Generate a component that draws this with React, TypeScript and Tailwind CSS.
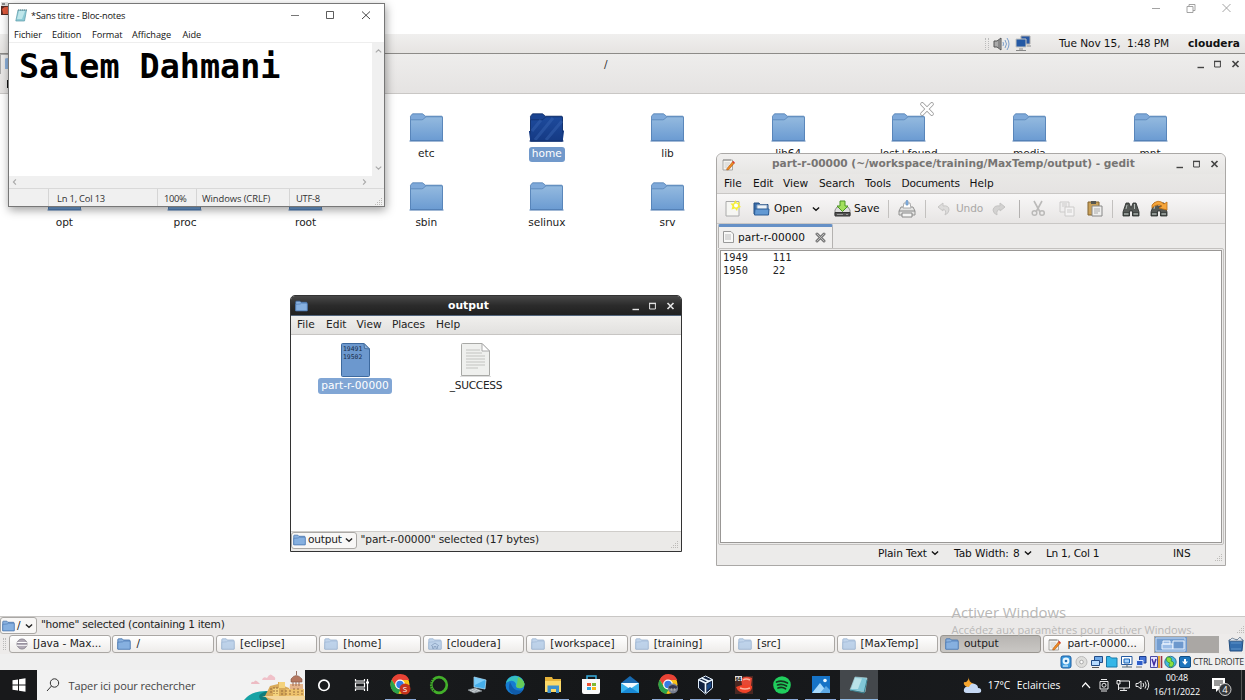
import React from "react";

type P = { className?: string };

function FolderShape({ dark = false }: { dark?: boolean }) {
  const id = React.useId();
  const top = dark ? "#1d4a9c" : "#94badf";
  const bottom = dark ? "#153a84" : "#6b9bd2";
  const line = dark ? "#0f2c66" : "#4f7db3";
  return (
    <>
      <defs>
        <linearGradient id={id} x1="0" y1="0" x2="0" y2="1">
          <stop offset="0" stopColor={top} />
          <stop offset="1" stopColor={bottom} />
        </linearGradient>
      </defs>
      <path d="M1.5 27V3.200L3.500 .800H13.500L16.500 3.200H32.500Q33.5 3.200 33.5 4.500V27Z" fill={dark ? "#1a4390" : "#7fa9d9"} stroke={line} strokeWidth=".8" />
      <path d="M1.5 27.5V7.500Q1.500 6.800 2.200 6.800H12.500Q14 6.800 15 5.500L17 3.800H32.5Q33.5 3.800 33.5 5V27.5Z" fill={`url(#${id})`} stroke={line} strokeWidth="0.7" />
      {dark && (
        <g stroke="#3a66b3" strokeWidth="3" opacity="0.45">
          <path d="M3 18L12 7M6 27L24 5M17 27L33 8" />
        </g>
      )}
      {dark && <path d="M.6 18L2 28H33L34.4 17.5" fill="none" stroke="#153a84" strokeWidth="1.4" />}
      <path d="M.500 28H34.500" stroke={dark ? "#102e68" : "#4674ae"} />
    </>
  );
}

function Folder({ className = "", dark = false }: P & { dark?: boolean }) {
  return (
    <svg className={className} viewBox="0 0 35 29">
      <FolderShape dark={dark} />
    </svg>
  );
}

function SmallFolder({ className = "", home = false }: P & { home?: boolean }) {
  return (
    <svg className={className} viewBox="0 0 14 12">
      <path d="M.8 11V1.6Q.8.8 1.6.8H5.2L6.4 2H12.2Q13 2 13 2.8V11Z" fill="#8bb2df" stroke="#3f6da7" strokeWidth=".8" />
      <path d="M.8 11.2V4.2L5.6 3.8 6.8 3H12.5Q13.2 3 13.2 3.8V11.2Z" fill="#86b0e0" stroke="#4b79b3" strokeWidth=".7" />
      {home && <path d="M3 8L7 5 11 8M4.5 8V10.5H6V8.5H8V10.5H9.5V8" fill="none" stroke="#2f5e9b" />}
    </svg>
  );
}

function Chevron({ className = "" }: P) {
  return (
    <svg className={className} viewBox="0 0 9 6">
      <path d="M1 1.2L4.5 4.4 8 1.2" fill="none" stroke="currentColor" strokeWidth="1.5" />
    </svg>
  );
}

function GtkControls({ className = "" }: P) {
  return (
    <svg className={className} viewBox="0 0 46 10" fill="none" stroke="currentColor">
      <path d="M1.500 8.5H8" strokeWidth="1.4" />
      <path d="M18.6 2.5H24.4V8H18.6Z" />
      <path d="M18 2.4H25" strokeWidth="1.4" />
      <path d="M36.500 2L42.500 8M42.500 2L36.500 8" strokeWidth="1.7" />
    </svg>
  );
}

function Grip({ className = "" }: P) {
  return (
    <svg className={className} viewBox="0 0 9 9" fill="#bdbbb8">
      <path d="M7 1h1v1H7zM7 3h1v1H7zM7 5h1v1H7zM7 7h1v1H7zM5 3h1v1H5zM5 5h1v1H5zM5 7h1v1H5zM3 5h1v1H3zM3 7h1v1H3zM1 7h1v1H1z" />
    </svg>
  );
}

function Eclipse() {
  return (
    <svg className="h-3 w-3" viewBox="0 0 12 12">
      <circle cx="6" cy="6" r="5" fill="#b0a9b5" stroke="#8f8a94" />
      <path d="M1.2 4.5H10.8M1 7.2H11" stroke="#fff" strokeWidth="1.2" />
      <path d="M1.2 6H10.8" stroke="#777080" strokeWidth=".8" />
    </svg>
  );
}

function NotePencil({ className = "" }: P) {
  return (
    <svg className={className} viewBox="0 0 13 13">
      <path d="M1 2H10.5V12H1Z" fill="#f5f5f2" stroke="#989894" strokeWidth=".8" />
      <path d="M2 1v2M4 1v2M6 1v2M8 1v2" stroke="#777" strokeWidth=".7" />
      <path d="M2.5 5H8M2.5 7H7M2.5 9H5.5" stroke="#bbb" strokeWidth=".7" />
      <path d="M5 10.5L10.8 3.5 12.4 5 6.8 11.6 4.7 12Z" fill="#f08b22" stroke="#a95510" strokeWidth=".6" />
      <path d="M10.8 3.5L12.4 5" stroke="#d33" strokeWidth="1.4" />
    </svg>
  );
}

const row1 = ["", "", "", "etc", "home", "lib", "lib64", "lost+found", "media", "mnt"];
const row2 = ["opt", "proc", "root", "sbin", "selinux", "srv", "", "", "", ""];

function FolderCell({ name }: { name: string }) {
  if (!name) return <div />;
  const sel = name === "home";
  return (
    <div className="relative flex flex-col items-center">
      <Folder className="h-[29px] w-[35px]" dark={sel} />
      <span
        className={
          sel
            ? "mt-[5px] h-[15px] rounded-[3px] bg-[#7199cb] px-[3px] text-[10.6px] leading-[13px] text-white"
            : "mt-[5px] h-[15px] px-[3px] text-[10.6px] leading-[13px] tracking-[-0.060px] text-[#222]"
        }
      >
        {name}
      </span>
      {name === "lost+found" && (
        <svg className="absolute top-[-12px] left-[71px] h-4 w-4" viewBox="0 0 16 16">
          <path d="M3.2 3.2L12.8 12.8M12.8 3.2L3.2 12.8" stroke="#9a9a9a" strokeWidth="4" strokeLinecap="round" />
          <path d="M3.2 3.2L12.8 12.8M12.8 3.2L3.2 12.8" stroke="#fff" strokeWidth="2.4" strokeLinecap="round" />
        </svg>
      )}
    </div>
  );
}

const tasks = ["[Java - Max...", "/", "[eclipse]", "[home]", "[cloudera]", "[workspace]", "[training]", "[src]", "[MaxTemp]", "output", "part-r-0000..."];

function TaskButton({ label, i }: { label: string; i: number }) {
  const active = label === "output";
  const faded = i > 1 && i < 9;
  return (
    <div
      className={
        active
          ? "flex h-[18px] w-[101.5px] items-center rounded-[3px] border border-[#999691] bg-linear-to-b from-[#b8b5b2] to-[#c9c7c4]"
          : "flex h-[18px] w-[101.5px] items-center rounded-[3px] border border-[#aaa7a4] bg-linear-to-b from-white to-[#eeecea]"
      }
    >
      <span className={faded ? "ml-[4px] w-[19px] opacity-50" : "ml-[4px] w-[19px]"}>
        {i === 0 ? <span className="ml-[2px] block"><Eclipse /></span> : i === 10 ? <NotePencil className="h-[13px] w-[13px]" /> : <SmallFolder className="h-3 w-[14px]" home={i === 4} />}
      </span>
      <span className="mt-[-2px] whitespace-nowrap text-[10.6px] leading-none tracking-[-0.050px] text-[#1c1c1c]">{label}</span>
    </div>
  );
}

function VmIcons() {
  return (
    <svg className="h-[14px] w-[133px]" viewBox="0 0 133 14">
      <rect x="1" y="1" width="10" height="12" rx="2" fill="#3b9be0" stroke="#1c5da0" />
      <circle cx="6" cy="6" r="3.4" fill="#e8f6ff" /><circle cx="6" cy="6" r="1.3" fill="#236caf" /><path d="M3 11H8" stroke="#fff" />
      <circle cx="21.500" cy="7" r="5.500" fill="#dededc" stroke="#bbb" /><circle cx="21.500" cy="7" r="1.800" fill="#fff" stroke="#aaa" />
      <g stroke="#214b86"><path d="M34.500 1.500H42.500V7.500H34.500Z" fill="#6da9e8" /><path d="M31.500 5.500H39.500V10.500H31.500Z" fill="#b6dbff" /></g><path d="M32 12.500H39" stroke="#555" />
      <path d="M46.500 12V1.500H50L51.500 3H57V12Z" fill="#35b6e7" stroke="#1978a8" />
      <path d="M61.500 1.500H72V9.500H61.500Z" fill="#fff" stroke="#2459a0" /><path d="M64 4H69.500V8H64Z" fill="#a7d3ff" stroke="#1d65b2" /><path d="M62 12H72M67 9V12" stroke="#567" />
      <path d="M79.500 1.500H86V8H79.500Z" fill="#4674d7" stroke="#193c90" /><path d="M76.500 5.500H83V10.500H76.500Z" fill="#2f5fc9" stroke="#e1ecff" /><path d="M76 12H82" stroke="#777" />
      <path d="M90.500 1.500H97.500V12.500H90.500Z" fill="#e8e4ff" stroke="#4b4aa1" /><path d="M92 4L94 10 96 4" fill="none" stroke="#402da0" strokeWidth="1.500" />
      <path d="M99 1V13" stroke="#e7a638" strokeWidth="2" /><path d="M101.500 1V13" stroke="#9a3140" strokeWidth="1.600" />
      <circle cx="110.500" cy="7" r="5.700" fill="#45b9df" stroke="#35759a" /><path d="M107 2Q113 2 111 6 116 7 112 12 107 12 110 8 105 7 107 2Z" fill="#8cdf3f" stroke="#2a8a34" strokeWidth=".700" />
      <rect x="119.500" y="1.500" width="11" height="11" rx="1.500" fill="#1d75bd" stroke="#114e85" /><path d="M124 4H126V6.500H128L125 10 122 6.500H124Z" fill="#fff" />
    </svg>
  );
}

function SearchArt() {
  return (
    <svg className="h-[30px] w-[62px]" viewBox="0 0 62 30">
      <path d="M8 14Q8 11 11 12 12 9 15 12L17 14Z" fill="#edbcc4" />
      <path d="M19 10Q20 6 24 8 27 2 30 6 33 7 32 10Z" fill="#f0c1c9" />
      <path d="M1 30Q8 21 23 21L37 23 62 26V30Z" fill="#16a2a5" />
      <path d="M18 30Q12 24 25 21L36 25Q31 27 32 30Z" fill="#127b79" />
      <path d="M22 26L27 16 35 14V12H41V16L46 18V26L34 30H25Z" fill="#d8aa59" />
      <path d="M30 18H36V27H30ZM36 12H42V18H36Z" fill="#f4d27b" />
      <path d="M47 14H60V28L46 27Z" fill="#e5b48a" />
      <path d="M48 12V9Q53 2 59 9V12Z" fill="#b4775f" stroke="#82513f" strokeWidth=".6" />
      <path d="M53.500 5V1" stroke="#82513f" strokeWidth=".8" /><path d="M50 16V12M53 16V12M56 16V12" stroke="#9a6752" />
      <path d="M43 19H61V28H43Z" fill="#edc16c" />
      <path d="M19 26H62V30H32Z" fill="#f3d69c" />
      <path d="M28 18V24M31 17V24M34 17V24M39 20V26M43 20V26M47 20V26M51 18V25M55 18V25M59 20V26" stroke="#8f6035" strokeWidth=".9" strokeDasharray="2 1" />
    </svg>
  );
}

function Chrome({ badge }: { badge: string }) {
  return (
    <svg className="h-6 w-6" viewBox="0 0 24 24">
      <circle cx="12" cy="11.500" r="9.500" fill="#fbc116" />
      <path d="M3.700 6.800A9.500 9.500 0 0 1 21.300 7H12L9 14.500Z" fill="#e94335" />
      <path d="M3.700 6.800L8 14Q10 16.500 13 16L10 20.900A9.500 9.500 0 0 1 3.700 6.800Z" fill="#2ba24c" />
      <circle cx="12" cy="11.500" r="4.900" fill="#fff" /><circle cx="12" cy="11.500" r="3.700" fill="#367be3" />
      {badge === "S" ? (
        <>
          <circle cx="17" cy="16" r="5.500" fill="#c5321d" />
          <text x="17" y="19" textAnchor="middle" fill="#fff" fontSize="8" fontFamily="Open Sans">S</text>
        </>
      ) : (
        <g><circle cx="17" cy="15.500" r="5" fill="#777e91" /><path d="M12.500 14Q17 10 21.500 14L19 17H15Z" fill="#35364f" /><circle cx="15.500" cy="16.500" r="1.200" fill="#aaa" /><circle cx="18.500" cy="16.500" r="1.200" fill="#aaa" /></g>
      )}
    </svg>
  );
}

const taskbar: { icon: React.ReactNode; open?: boolean }[] = [
  { icon: <svg className="h-6 w-6" viewBox="0 0 24 24"><circle cx="12" cy="12.300" r="5.200" fill="none" stroke="#fff" strokeWidth="1.700" /></svg> },
  { icon: <svg className="h-6 w-6" viewBox="0 0 24 24" fill="none" stroke="#fff" strokeWidth="1.200"><path d="M5.500 6V8H14.500V6M5.500 18V16H14.500V18M5.500 10H14.500V14H5.500ZM17.500 6V18" /><path d="M16 9.500H19" strokeWidth="2" /></svg> },
  { icon: <Chrome badge="S" />, open: true },
  { icon: <svg className="h-6 w-6" viewBox="0 0 24 24"><circle cx="12" cy="12" r="7.800" fill="none" stroke="#43b02a" strokeWidth="2.700" /><path d="M6 6A8 8 0 0 0 7 18" fill="none" stroke="#1a2b1c" strokeWidth="1.400" strokeDasharray="1 1.500" /></svg> },
  { icon: <svg className="h-6 w-6" viewBox="0 0 24 24"><path d="M9 4L21 7 20 16 9 14Z" fill="#45aeea" stroke="#bce7ff" strokeWidth=".700" /><path d="M9.500 4.500L20 7 10 12Z" fill="#7fcdf7" /><path d="M3 17L10 15 17 18 9 20Z" fill="#d7dde0" stroke="#81898e" strokeWidth=".7" /><path d="M6 17L12 19M8 16L14 18.500" stroke="#78838a" strokeWidth=".6" /></svg> },
  { icon: <svg className="h-6 w-6" viewBox="0 0 24 24"><circle cx="12" cy="12" r="9.500" fill="#167bd0" /><path d="M3 10C5 1 19 0 21.500 11Q21 16 15 15 12 14 13 11 10 5 3 10Z" fill="#36bfc0" /><path d="M15 4Q21 7 21.500 11 21 16 15 15 12 14 14 11Z" fill="#67cc59" /><path d="M7 9Q3 20 13 21.500 18 21 20 17 12 19 9 13Z" fill="#105ba9" /></svg> },
  { icon: <svg className="h-6 w-6" viewBox="0 0 24 24"><path d="M4 4H11L12 6H20V19H4Z" fill="#e6b33a" /><path d="M4 8H20V19H4Z" fill="#fbd969" /><path d="M6.500 20V12.500H18V20H15V16H10V20Z" fill="#3c91ce" /></svg>, open: true },
  { icon: <svg className="h-6 w-6" viewBox="0 0 24 24"><path d="M8 7V3H17V7" fill="none" stroke="#39aede" strokeWidth="1.500" /><path d="M3 6H21V19Q21 21 19 21H5Q3 21 3 19Z" fill="#f9f9f9" /><path d="M8 10H12V13H8Z" fill="#ef5132" /><path d="M13 10H17V13H13Z" fill="#80b935" /><path d="M8 14H12V17H8Z" fill="#31a7df" /><path d="M13 14H17V17H13Z" fill="#f5b817" /></svg> },
  { icon: <svg className="h-6 w-6" viewBox="0 0 24 24"><path d="M3 10L12 3 21 10V19H3Z" fill="#1769af" /><path d="M3 10H21V20H3Z" fill="#36b2ed" /><path d="M3 10L12 16 21 10" fill="#eefaff" /><path d="M3 20L12 14 21 20Z" fill="#1989d4" /></svg> },
  { icon: <Chrome badge="" />, open: true },
  { icon: <svg className="h-6 w-6" viewBox="0 0 24 24"><path d="M11.500 3L18.500 6.500V15L11.500 21 4.500 15V6.500Z" fill="#10213f" stroke="#e0edfa" /><path d="M4.500 6.500L11.500 10 18.500 6.500M11.500 10V20M7.500 5L15.500 8.500" fill="none" stroke="#edf7ff" strokeWidth="1.600" /><path d="M13 12L17 9V14L13 17.500Z" fill="#184785" /></svg>, open: true },
  { icon: <svg className="h-6 w-6" viewBox="0 0 24 24"><path d="M3 3H21V21H3Z" fill="#492722" /><path d="M9 6Q13 2 20 5L19 13Q14 15 10 12Z" fill="#e64834" /><path d="M4 14Q13 10 20 13 21 18 14 20 6 20 4 14Z" fill="#f04228" /><path d="M11 7Q14 5 18 7M8 15Q13 17 18 15" fill="none" stroke="#ffb19c" strokeWidth="1.500" /><path d="M3 3H10V8H3Z" fill="#ddd" /><text x="3.500" y="7.500" fontSize="5" fontFamily="Liberation Sans" fontWeight="bold">64</text></svg>, open: true },
  { icon: <svg className="h-6 w-6" viewBox="0 0 24 24"><circle cx="12" cy="12" r="8.800" fill="#20ce5d" /><path d="M6.500 9Q12 7 17.500 10M7.500 12Q12 10.500 16.500 13M8 15Q12 13.500 15.500 15.800" fill="none" stroke="#15361f" strokeWidth="1.700" strokeLinecap="round" /></svg>, open: true },
  { icon: <svg className="h-6 w-6" viewBox="0 0 24 24"><path d="M3 3H21V20H3Z" fill="#1673c6" /><path d="M3 20L11 10 19 20Z" fill="#a8dafb" /><path d="M11 20L17 13 21 17V20Z" fill="#5da9e4" /><circle cx="16" cy="7.500" r="1.800" fill="#edf9ff" /></svg>, open: true },
  { icon: <svg className="h-6 w-6" viewBox="0 0 24 24"><path d="M8 4L20 5 18 19 3 17Z" fill="#80c6d6" stroke="#b9d8dc" strokeWidth=".6" /><path d="M8 5L15 5.500 11 16 4 16Z" fill="#c7e9ec" opacity=".8" /><path d="M3 17L17 20 20 7" fill="none" stroke="#398190" /></svg>, open: true },
];

function GeditToolbar() {
  return (
    <div className="flex h-[31px] items-center border-t border-b border-t-[#c9c7c5] border-b-[#c9c7c5] bg-linear-to-b from-[#f8f7f7] to-[#e7e5e4] pl-[8px] text-[10.6px]">
      <svg className="mr-[12px] h-[17px] w-4" viewBox="0 0 16 17"><path d="M1 1.500H14V16H1Z" fill="#f6f6f3" stroke="#aaa" /><path d="M10.500 0L12 3 15 2 14 5 16 7 13 8 12 11 10 8.500 6.500 9.500 7.500 6 5.500 3.500 8.500 3.500Z" fill="#f5ee35" /><circle cx="11" cy="5.500" r="2" fill="#fff" /></svg>
      <svg className="mr-[4px] h-4 w-[17px]" viewBox="0 0 17 16"><path d="M1 13V2H6L7 3.500H15V13Z" fill="#396da9" stroke="#244f83" /><path d="M4 4H14V9H4Z" fill="#eef3f8" stroke="#8ca5c1" /><path d="M2 8H16L15.500 14H1.500Z" fill="#6299d3" stroke="#2c5d96" /></svg>
      <span className="w-[38px]">Open</span>
      <Chevron className="mr-[14px] h-[6px] w-2" />
      <svg className="mr-[3px] h-[17px] w-[17px]" viewBox="0 0 17 17"><path d="M1 10L3 7H14L16 10V15H1Z" fill="#ddd" stroke="#777" strokeWidth=".8" /><path d="M1 12.500H16V16H1Z" fill="#555" stroke="#333" /><path d="M6 1H11V6H14L8.500 11.500 3 6H6Z" fill="#a2e05c" stroke="#4c9525" /><path d="M3 14.500H9M12 14.500H14" stroke="#999" /></svg>
      <span className="w-[34px] tracking-[-0.150px]">Save</span>
      <span className="mr-[9px] h-[18px] w-px bg-[#c3c1bf]" />
      <svg className="mr-[9px] h-[18px] w-[18px]" viewBox="0 0 18 18"><path d="M3 7H15L17 11V15H1V11Z" fill="#e3e3e2" stroke="#929291" /><path d="M5 8L6 3H12L13 8Z" fill="#fff" stroke="#aaa" /><path d="M8 1Q9-.5 10 1V5H8Z" fill="#8bb9ec" stroke="#628cb9" strokeWidth=".7" /><path d="M1 11H17M4 13H14V17H4Z" fill="#f5f5f4" stroke="#888" /></svg>
      <span className="mr-[11px] h-[18px] w-px bg-[#c3c1bf]" />
      <svg className="mr-[5px] h-[14px] w-[14px]" viewBox="0 0 14 14"><path d="M1 5L6 1V4Q12 3 12 8 12 11 8 13 10 8 6 7V9Z" fill="#dddcdb" stroke="#c7c6c5" /></svg>
      <span className="w-[36px] tracking-[-0.150px] text-[#aaa8a6]">Undo</span>
      <svg className="mr-[13px] h-[14px] w-[14px]" viewBox="0 0 14 14"><path d="M13 5L8 1V4Q2 3 1 8 1 11 5 13 4 8 8 7V9Z" fill="#d3d2d1" stroke="#c5c4c3" /></svg>
      <span className="mr-[11px] h-[18px] w-px bg-[#b3b1b0]" />
      <svg className="mr-[13px] h-[17px] w-[15px]" viewBox="0 0 15 17" fill="none" stroke="#bbbab9"><path d="M3 1L9 12M11 1L5 12" strokeWidth="1.600" /><circle cx="3.500" cy="13" r="2.300" strokeWidth="1.500" /><circle cx="11" cy="13" r="2.300" strokeWidth="1.500" /></svg>
      <svg className="mr-[12px] h-4 w-4" viewBox="0 0 16 16" stroke="#cccbca"><path d="M1 1H10V11H1Z" fill="#efeeee" /><path d="M6 6H15V15H6Z" fill="#f4f3f3" /><path d="M3 3H8M3 5H8M8 9H13M8 11H13" /></svg>
      <svg className="mr-[9px] h-[17px] w-4" viewBox="0 0 16 17"><path d="M1 2H12V15H1Z" fill="#c9a15a" stroke="#81622e" /><path d="M4 1H9V4H4Z" fill="#565650" /><path d="M5 6H15V16H5Z" fill="#eeeeed" stroke="#888" /><path d="M7 9H13M7 11H13M7 13H11" stroke="#aaa" /></svg>
      <span className="mr-[9px] h-[18px] w-px bg-[#c3c1bf]" />
      <Binoculars />
      <span className="ml-[10px]"><Binoculars replace /></span>
    </div>
  );
}

function Binoculars({ replace = false }: { replace?: boolean }) {
  return (
    <svg className="h-[18px] w-[18px]" viewBox="0 0 18 18">
      <path d="M4 3H7L8.500 7H9.500L11 3H14L17 12V16H10.500V11H7.500V16H1V12Z" fill="#555956" stroke="#272b29" strokeWidth=".8" />
      <path d="M1.500 12.500H7V15.500H1.500ZM11 12.500H16.500V15.500H11Z" fill="#8f9692" stroke="#202522" strokeWidth=".6" />
      <path d="M5 5L4 9M12.500 4V9" stroke="#b4bbb7" />
      {replace && <path d="M2 5Q8-2 14 4L17 2V10L9 8 12 6Q7 3 2 8Z" fill="#f6a53a" stroke="#bd6e15" strokeWidth=".8" />}
    </svg>
  );
}

function Gedit() {
  return (
    <div className="absolute top-[153px] left-[716px] flex h-[413px] w-[510px] flex-col rounded-t-[6px] border border-[#aaa8a6] bg-[#ecebea] text-[#111]">
      <div className="flex h-[20px] shrink-0 items-center rounded-t-[5px] bg-linear-to-b from-[#f1f0ef] to-[#e7e6e4]">
        <NotePencil className="ml-[5px] h-[13px] w-[13px]" />
        <span className="mt-[-1px] ml-[37px] w-[401px] whitespace-nowrap text-[10.6px] leading-none font-bold tracking-[-0.020px] text-[#777573]">part-r-00000 (~/workspace/training/MaxTemp/output) - gedit</span>
        <GtkControls className="ml-[2px] h-[10px] w-[46px] text-[#444]" />
      </div>
      <div className="flex h-[19px] shrink-0 items-center bg-linear-to-b from-[#e9e8e6] to-[#e5e3e2] pl-[7px] text-[10.6px] leading-none whitespace-nowrap">
        <span className="w-[29px]">File</span><span className="w-[30px]">Edit</span><span className="w-[36px]">View</span><span className="w-[46px] tracking-[-0.150px]">Search</span><span className="w-[36.500px]">Tools</span><span className="w-[68px] tracking-[-0.250px]">Documents</span><span>Help</span>
      </div>
      <GeditToolbar />
      <div className="flex h-[24px] shrink-0 items-end pl-px">
        <div className="flex h-[24px] w-[115px] items-center rounded-t-[2px] border border-t-[3px] border-b-0 border-[#b4b2b0] border-t-[#6590c6] bg-[#f0efee] pb-px">
          <svg className="ml-[4px] h-3 w-[11px]" viewBox="0 0 11 12"><path d="M.5.500H8L10.500 3V11.500H.500Z" fill="#f8f8f7" stroke="#999" /><path d="M2 4H8M2 6H8M2 8H8" stroke="#bbb" /></svg>
          <span className="ml-[4px] w-[77px] whitespace-nowrap text-[10.6px] leading-none tracking-[0.030px]">part-r-00000</span>
          <svg className="h-[11px] w-[11px]" viewBox="0 0 11 11"><path d="M2 2L9 9M9 2L2 9" stroke="#777" strokeWidth="3" strokeLinecap="round" /><path d="M2 2L9 9M9 2L2 9" stroke="#bbb" strokeWidth="1" strokeLinecap="round" /></svg>
        </div>
      </div>
      <div className="mx-px h-[297px] shrink-0 rounded-[2px] border border-[#c3c1bf] p-px">
        <div className="h-full border border-[#999795] bg-white pl-[2px] font-['DejaVu_Sans_Mono',monospace] text-[10.35px] leading-[13px] whitespace-pre text-[#222]">{"1949    111\n1950    22"}</div>
      </div>
      <div className="flex h-[16px] items-center pl-[161px] text-[10.6px] leading-none whitespace-nowrap">
        <span className="w-[53px] tracking-[-0.150px]">Plain Text</span><Chevron className="h-[6px] w-2" />
        <span className="ml-[15px] w-[59px] tracking-[-0.080px]">Tab Width:</span><span className="w-[11px]">8</span><Chevron className="h-[6px] w-2" />
        <span className="ml-[14px] w-[127px] tracking-[-0.300px]">Ln 1, Col 1</span><span className="w-[41px]">INS</span><Grip className="mt-2 h-[9px] w-[9px]" />
      </div>
    </div>
  );
}

function OutputWindow() {
  return (
    <div className="absolute top-[295px] left-[290px] flex h-[257px] w-[392px] flex-col rounded-t-[5px] border border-[#333] bg-white">
      <div className="flex h-[20px] shrink-0 items-center rounded-t-[4px] border-b border-[#52657c] bg-linear-to-b from-[#484848] via-[#2b2b2b] to-[#202020] text-white">
        <SmallFolder className="ml-[4px] h-3 w-[13px]" />
        <span className="mt-[1px] ml-[140px] w-[180px] text-[10.8px] leading-none font-bold">output</span>
        <GtkControls className="ml-[3px] h-[10px] w-[46px] text-[#e4e4e4]" />
      </div>
      <div className="flex h-[19px] shrink-0 items-center border-b border-[#c7c5c3] bg-linear-to-b from-[#f0efed] to-[#e2e1df] pb-px pl-[6px] text-[10.6px] leading-none text-[#222]">
        <span className="w-[29px]">File</span><span className="w-[30.500px]">Edit</span><span className="w-[35.500px]">View</span><span className="w-[44px] tracking-[-0.150px]">Places</span><span>Help</span>
      </div>
      <div className="flex grow pt-[8px] pl-[4px]">
        <div className="flex w-[120px] flex-col items-center">
          <div className="relative h-[34px] w-[29px]">
            <svg className="absolute inset-0 h-[34px] w-[29px]" viewBox="0 0 29 34"><path d="M.500 1.500Q.500.500 1.500.500H23L28.500 6V32.500Q28.500 33.500 27.500 33.500H1.500Q.500 33.500.500 32.500Z" fill="#6c98ce" stroke="#3d699e" /><path d="M23 .500L23.500 5.500 28.500 6Z" fill="#8fb2dc" stroke="#48719f" /></svg>
            <div className="relative pt-[2px] pl-[2.500px] font-['DejaVu_Sans_Mono',monospace] text-[6.400px] leading-[8px] whitespace-pre text-[#182d49]">{"19491\n19502"}</div>
          </div>
          <span className="mt-[1px] h-[16px] rounded-[3px] bg-[#81a6d5] px-[3px] text-[10.6px] leading-[15px] tracking-[0.080px] whitespace-nowrap text-white">part-r-00000</span>
        </div>
        <div className="flex w-[121px] flex-col items-center">
          <svg className="h-[34px] w-[31px]" viewBox="0 0 31 34"><path d="M1.500 1.500Q1.500.500 2.500.500H22L29.500 8V32.500H1.500Z" fill="#eff0ee" stroke="#a8a9a6" /><path d="M22 .500V8H29.500Z" fill="#fff" stroke="#aaa" /><path d="M6 7H20M6 10H22M6 13H25M6 16H25M6 19H25M6 22H25M6 25H18" stroke="#c2c3c0" /><path d="M0 33.500H31" stroke="#ddd" /></svg>
          <span className="mt-[1px] ml-[1px] text-[10.6px] leading-[15px] tracking-[-0.300px] text-[#222]">_SUCCESS</span>
        </div>
      </div>
      <div className="flex h-[20px] shrink-0 items-center border-t border-[#cfcdca] bg-[#ebeae8] pb-[3px] text-[10.6px] leading-none whitespace-nowrap text-[#222]">
        <div className="flex h-[17px] w-[66px] items-center rounded-[3px] border border-[#aaa8a5] bg-[#f8f7f6] pl-[1px]">
          <SmallFolder className="mr-[2px] h-3 w-[13px]" /><span className="mt-[-1px] w-[37px] tracking-[-0.200px]">output</span><Chevron className="h-[6px] w-2" />
        </div>
        <span className="mt-[-1px] ml-[3.500px] grow tracking-[-0.110px]">"part-r-00000" selected (17 bytes)</span>
        <Grip className="mt-2 mr-[2px] h-[9px] w-[9px]" />
      </div>
    </div>
  );
}

function Notepad() {
  return (
    <div className="absolute top-[3px] left-[8px] flex h-[204px] w-[377px] flex-col border border-[#777] bg-white font-['Open_Sans','Noto_Sans',sans-serif] text-[#111] shadow-[1px_3px_9px_rgba(0,0,0,0.38)]">
      <div className="flex h-[22px] shrink-0 items-center">
        <svg className="ml-[6px] h-[13px] w-[12px]" viewBox="0 0 12 13"><path d="M3 1H11.500L9.500 12H.800Z" fill="#8ecad5" stroke="#5b9caa" strokeWidth=".7" /><path d="M4 2H10L7 10H2Z" fill="#bfe6ea" /><path d="M3 1H12" stroke="#728488" strokeDasharray="1 1" /></svg>
        <span className="mt-[1px] ml-[4px] w-[259px] text-[9.200px] leading-none tracking-[-0.170px] whitespace-nowrap">*Sans titre - Bloc-notes</span>
        <svg className="h-[12px] w-[82px]" viewBox="0 0 82 12" fill="none" stroke="#333"><path d="M1 6.500H9" stroke="#777" /><path d="M36.500 2.500H43.500V9.500H36.500Z" strokeWidth=".8" /><path d="M72 2.500L80 10M80 2.500L72 10" strokeWidth=".9" /></svg>
      </div>
      <div className="flex h-[17px] shrink-0 items-center border-b border-[#eee] pt-[2px] pl-[5px] text-[9.200px] leading-none tracking-[-0.070px] whitespace-nowrap">
        <span className="w-[38px]">Fichier</span><span className="w-[40px]">Edition</span><span className="w-[40px]">Format</span><span className="w-[50.500px]">Affichage</span><span>Aide</span>
      </div>
      <div className="flex h-[133px] shrink-0">
        <div className="h-full w-[363px] pt-[4px] pl-[10px] font-['DejaVu_Sans_Mono',monospace] text-[33.400px] leading-[40px] font-bold whitespace-pre text-black">Salem Dahmani</div>
        <div className="flex w-[12px] flex-col items-center justify-between bg-[#f0f0f0] py-[5px] text-[#aaa]">
          <Chevron className="h-[6px] w-[7px] rotate-180" /><Chevron className="h-[6px] w-[7px]" />
        </div>
      </div>
      <div className="flex h-[12px] shrink-0 items-center justify-between bg-[#f0f0f0] pr-[16px] pl-[2px] text-[#aaa]">
        <Chevron className="h-[6px] w-[7px] rotate-90" /><Chevron className="h-[6px] w-[7px] -rotate-90" />
      </div>
      <div className="flex h-[18px] items-center border-t border-[#d9d9d9] bg-[#f0f0f0] text-[9.400px] leading-[19px] tracking-[-0.080px] whitespace-nowrap text-[#333]">
        <span className="h-full w-[39px]" /><span className="h-full w-[109px] border-l border-[#d5d5d5] pl-[8px] tracking-[-0.200px]">Ln 1, Col 13</span><span className="h-full w-[39px] border-l border-[#d5d5d5] pl-[6px] tracking-[-0.350px]">100%</span><span className="h-full w-[93px] border-l border-[#d5d5d5] pl-[5px]">Windows (CRLF)</span><span className="h-full w-[85px] border-l border-[#d5d5d5] pl-[6px] tracking-[-0.250px]">UTF-8</span><Grip className="mt-2 h-[9px] w-[9px]" />
      </div>
    </div>
  );
}

function WindowsTaskbar() {
  return (
    <div className="flex h-[30px] shrink-0 bg-linear-to-r from-[#1e2022] via-[#151719] to-[#1b1d20] font-['Open_Sans','Noto_Sans',sans-serif] text-white">
      <div className="flex w-[37px] items-center justify-center bg-[#18191b]">
        <svg className="h-[14px] w-[14px]" viewBox="0 0 14 14" fill="#fff"><path d="M.500 2.300L6 1.500V6.500H.500ZM7 1.300L13.500.300V6.500H7ZM.500 7.500H6V12.500L.500 11.700ZM7 7.500H13.500V13.700L7 12.700Z" /></svg>
      </div>
      <div className="flex w-[268px] items-center bg-[#f2f2f2] text-[#444]">
        <svg className="ml-[9px] h-[14px] w-[14px]" viewBox="0 0 14 14" fill="none" stroke="#333"><circle cx="8.500" cy="5" r="4.200" /><path d="M5.500 8L1 13" /></svg>
        <span className="ml-[8.500px] w-[138px] text-[11px] leading-none tracking-[-0.110px] whitespace-nowrap">Taper ici pour rechercher</span>
        <span className="ml-[36.500px]"><SearchArt /></span>
      </div>
      {taskbar.map((t, i) => (
        <div key={i} className={i === 14 ? "flex w-[38.200px] flex-col items-center bg-[#44484c] pt-[3px]" : "flex w-[38.200px] flex-col items-center pt-[3px]"}>
          {t.icon}
          {t.open && <span className={i === 14 ? "mt-[2px] h-px w-full bg-[#91b9e1]" : "mt-[2px] h-px w-[31px] bg-[#8eacd8]"} />}
        </div>
      ))}
      <svg className="mt-[6px] ml-[84px] h-[19px] w-[22px]" viewBox="0 0 22 19"><path d="M7 1Q6 6 12 8 10 13 5 11 1 9 2 6 4 7 6 4 7 2 7 1Z" fill="#f6a52d" /><path d="M5 17Q1 17 2 13 3 10 7 11 9 6 13 8 16 9 16 12 20 12 19 16 18 17 16 17Z" fill="#c6d9f4" /></svg>
      <span className="ml-[4px] w-[29px] text-[10.200px] leading-[30px] whitespace-nowrap">17°C</span>
      <span className="w-[65px] text-[10.200px] leading-[30px] whitespace-nowrap">Eclaircies</span>
      <svg className="mt-[7px] h-4 w-[68px]" viewBox="0 0 68 16" fill="none" stroke="#fff"><path d="M-1 11L3.500 6 8 11" strokeWidth="1.200" /><path d="M18 4.500H26V12H18ZM19 2.500H25M19 14H25" strokeWidth=".9" /><circle cx="22" cy="8.200" r="2" strokeWidth=".9" /><path d="M37 4H47.500V11H37M42 11V13M38 13.500H45M35 3.500H38V7H35ZM36.500 7V13" strokeWidth=".9" /><path d="M54 6.500H56L59 4V12L56 9.500H54ZM61 6Q62.500 8 61 10M63 4.500Q65.500 8 63 11.500M65 3Q68.500 8 65 13" strokeWidth=".9" /></svg>
      <div className="mt-[1px] w-[54px] text-center text-[9px] leading-[13.500px] tracking-[-0.160px] whitespace-nowrap"><div>00:48</div><div>16/11/2022</div></div>
      <svg className="mt-[7px] ml-[7px] h-[22px] w-[22px]" viewBox="0 0 22 22"><path d="M1 1H14V12H8L5 15V12H1Z" fill="#fff" /><path d="M3 4H12M3 6H12M3 8H9" stroke="#333" /><circle cx="14" cy="12.500" r="6" fill="#35383b" stroke="#ccc" /><text x="14" y="16" textAnchor="middle" fill="#fff" fontSize="9.500" fontFamily="Open Sans">4</text></svg>
      <span className="ml-auto w-[4px] border-l border-[#555]" />
    </div>
  );
}

export default function App() {
  return (
    <div className="relative flex h-[700px] w-[1245px] flex-col overflow-hidden bg-white font-['DejaVu_Sans',sans-serif]">
      <div className="flex h-[34px] shrink-0 items-start justify-between">
        <svg className="mt-[2px] ml-[1px] h-[14px] w-4" viewBox="0 0 16 14"><path d="M0 1H15V13H0Z" fill="#552c25" /><path d="M1 7Q4 3 13 6L12 12H2Z" fill="#e0593c" /><path d="M0 0H7V4H0Z" fill="#ddd" /><path d="M1 2H4" stroke="#333" /></svg>
        <svg className="mt-[2px] mr-[13px] h-3 w-[82px]" viewBox="0 0 82 12" fill="none" stroke="#999"><path d="M2 6.500H10M37 4.500H43V10.500H37ZM39 4V2.500H45V8.500H43M72.500 2L80.500 10M80.500 2L72.500 10" strokeWidth=".9" /></svg>
      </div>
      <div className="flex h-[20px] shrink-0 items-center border-b border-[#8d8b88] bg-linear-to-b from-[#f0efee] to-[#e6e4e2] text-[10.6px] leading-none whitespace-nowrap text-[#111]">
        <span className="ml-[985px] h-3 w-[4px] border-x border-dotted border-[#bbb]" />
        <svg className="ml-[4px] h-4 w-[17px]" viewBox="0 0 17 16"><path d="M1 5H4L8 2V14L4 11H1Z" fill="#aaa" stroke="#555" /><path d="M6 4V12" stroke="#666" /><path d="M10 6Q11 8 10 10M12 4Q15 8 12 12M14 2Q18 8 14 14" fill="none" stroke="#7c9fcb" /></svg>
        <svg className="ml-[4px] h-[17px] w-[18px]" viewBox="0 0 18 17"><path d="M7 1H16V9H7Z" fill="#2858a4" stroke="#aaa" /><path d="M2 4H12V12H2Z" fill="#2459a4" stroke="#c5c5c0" /><path d="M5 14H9M2 15.500H12" stroke="#888" /><path d="M13 11H17" stroke="#bbb" strokeWidth="2" /></svg>
        <span className="mt-[-1px] ml-[27px] w-[129px] tracking-[-0.080px] whitespace-pre">Tue Nov 15,  1:48 PM</span>
        <span className="mt-[-1px] font-bold">cloudera</span>
      </div>
      <div className="relative flex h-[40px] shrink-0 justify-end border-b border-[#c9c7c5] bg-linear-to-b from-[#eeedec] to-[#e5e3e2] text-[10.6px]">
        <svg className="absolute top-0 left-0 h-[39px] w-[9px]" viewBox="0 0 9 39"><path d="M0 .500H9M.500 0V20" stroke="#aaa" /><path d="M5 5Q5 4 9 4V15H5Z" fill="#8eb2dc" /><path d="M7.500 26V34" stroke="#111" /></svg>
        <span className="mt-[3px] w-[591px] leading-[14px] text-[#333]">/</span>
        <GtkControls className="mt-[5px] mr-[2px] h-[10px] w-[48px] text-[#444]" />
      </div>
      <div className="grid h-[522px] shrink-0 auto-rows-[69px] grid-cols-[repeat(10,120.650px)] pt-[19px] pl-[4px]">
        {[...row1, ...row2].map((n, i) => <FolderCell key={i} name={n} />)}
      </div>
      <div className="flex h-[18px] shrink-0 items-center border-t border-[#c9c7c5] bg-[#ebe9e8] text-[10.6px] leading-none whitespace-nowrap text-[#222]">
        <div className="flex h-[17px] w-[37px] items-center rounded-[3px] border border-[#aaa8a5] bg-[#f8f7f6] pl-[1px]"><SmallFolder className="mr-[2px] h-3 w-[13px]" /><span className="w-[8px]">/</span><Chevron className="h-[6px] w-2" /></div>
        <span className="mt-[-2px] ml-[4px] grow tracking-[-0.260px]">"home" selected (containing 1 item)</span><Grip className="mt-2 h-[9px] w-[9px]" />
      </div>
      <div className="flex h-[20px] shrink-0 items-center bg-[#edebea]">
        <span className="ml-[3px] h-3 w-[3px] border-x border-dotted border-[#bbb]" />
        <div className="ml-[3px] flex gap-[1.950px]">{tasks.map((t, i) => <TaskButton key={t} label={t} i={i} />)}</div>
        <div className="ml-[9px] flex h-[17px] w-[65px] border border-[#aaa8a5] bg-[#aaa7a4]">
          <div className="flex w-[32px] items-center justify-center bg-[#6d98cd]"><svg className="h-[15px] w-[31px]" viewBox="0 0 31 15" fill="#9cbde7" stroke="#eef5ff"><path d="M1 1H30V14H1Z" fill="#739dd0" stroke="#c9dcf3" /><path d="M7 7H18V12H7ZM8 4H15V7H8Z" /><path d="M18 4H29V12H18Z" fill="#6d98cd" /></svg></div>
        </div>
        <svg className="ml-[9px] h-4 w-[16px]" viewBox="0 0 16 16"><path d="M1 4H15L14 15H2Z" fill="#356fae" stroke="#224e80" /><path d="M1 5L4 2 9 4 12 1 15 5Z" fill="#dfe7f0" stroke="#596b7e" strokeWidth=".7" /><path d="M3 7H13M3 13H13" stroke="#5e94c8" /></svg>
      </div>
      <div className="flex h-4 shrink-0 items-center bg-[#efefef]">
        <span className="ml-[1060px]"><VmIcons /></span>
        <span className="whitespace-nowrap font-['Open_Sans',sans-serif] text-[8.800px] leading-none tracking-[-0.240px] text-[#333]">CTRL DROITE</span>
      </div>
      <WindowsTaskbar />
      <OutputWindow />
      <Gedit />
      <Notepad />
      <div className="absolute top-[603px] left-[951.500px] whitespace-nowrap font-['Open_Sans',sans-serif] text-[#b8b7b6]">
        <div className="text-[14.900px] leading-[18px]">Activer Windows</div>
        <div className="text-[11px] leading-[18px]">Accédez aux paramètres pour activer Windows.</div>
      </div>
    </div>
  );
}
